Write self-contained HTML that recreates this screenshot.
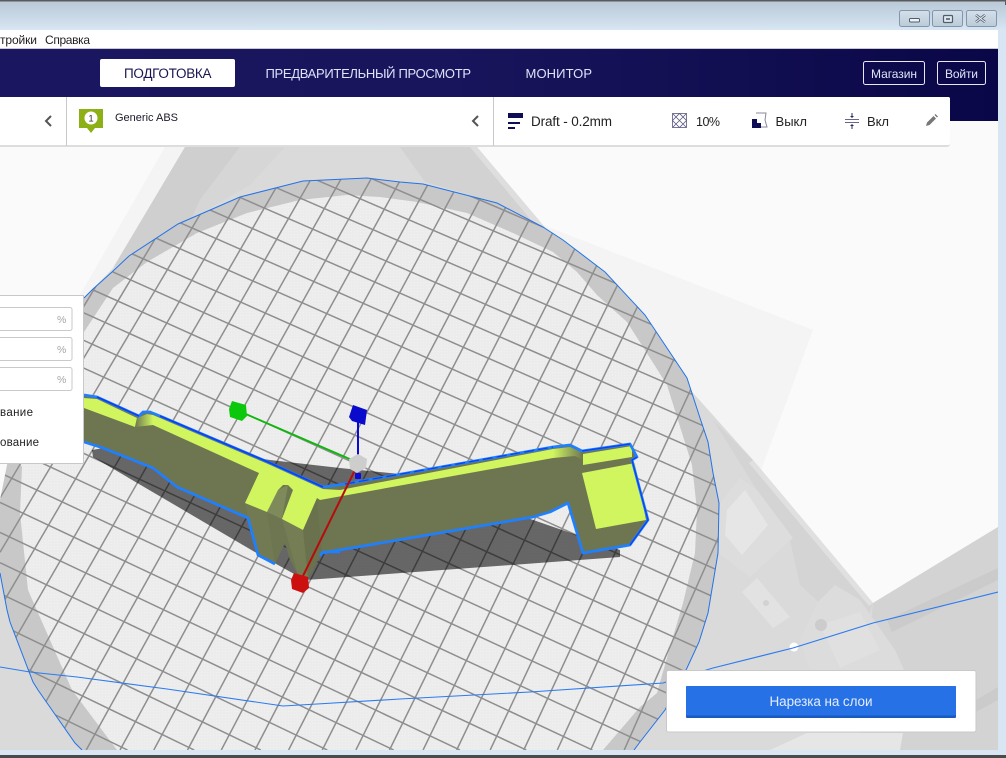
<!DOCTYPE html>
<html><head><meta charset="utf-8"><style>
html,body{margin:0;padding:0;width:1006px;height:758px;overflow:hidden;background:#d8e5f2}
svg{display:block;position:absolute;left:0;top:0}
text{font-family:"Liberation Sans","Noto Sans CJK SC",sans-serif}
</style></head><body>
<svg id="s" width="1006" height="758" viewBox="0 0 1006 758" xmlns="http://www.w3.org/2000/svg">
<defs>
<linearGradient id="tb" x1="0" y1="0" x2="0" y2="1"><stop offset="0" stop-color="#b8c8d8"/><stop offset="1" stop-color="#d8e6f3"/></linearGradient>
<linearGradient id="nav" x1="0" y1="0" x2="1" y2="0"><stop offset="0" stop-color="#1a1660"/><stop offset=".45" stop-color="#19155c"/><stop offset="1" stop-color="#0a0748"/></linearGradient>
<linearGradient id="wb" x1="0" y1="0" x2="0" y2="1"><stop offset="0" stop-color="#d4e0ea"/><stop offset="1" stop-color="#bccbd9"/></linearGradient>
<linearGradient id="fade" x1="0" y1="0" x2="1" y2="0"><stop offset="0" stop-color="#d0f55f"/><stop offset="1" stop-color="#6d7650"/></linearGradient>
<linearGradient id="fade2" x1="0" y1="0" x2="1" y2="0"><stop offset="0" stop-color="#6d7650"/><stop offset="1" stop-color="#d0f55f"/></linearGradient>
<pattern id="dots" width="3" height="3" patternUnits="userSpaceOnUse"><rect width="3" height="3" fill="#ececec"/><rect width="1" height="1" fill="#f1f1f1"/></pattern>
<clipPath id="vp"><rect x="0" y="49" width="998" height="701"/></clipPath>
<clipPath id="pl"><polygon points="0,500 20,400 84,298 93,289 112,272 129,256 178,224 240,197 303,181 367,178 400,182 423,184 497,203 543,227 563,240 605,272 645,315 663,342 687,378 700,418 708,442 713,473 719,503 718,553 708,613 699,642 687,668 665,710 640,742 634,750 82,750 75,743 38,690 33,682 10,622 7,610 0,573"/></clipPath>
</defs>

<!-- window chrome -->
<rect x="0" y="0" width="1006" height="758" fill="#d8e5f2"/>
<rect x="0" y="1" width="1006" height="29" fill="url(#tb)"/>
<rect x="0" y="0" width="1006" height="1.5" fill="#5a5a5a"/>
<rect x="0" y="755" width="1006" height="3" fill="#4a4a4a"/>
<rect x="1005" y="0" width="1" height="5" fill="#5a5a5a"/>

<rect x="899.5" y="10.5" width="30" height="16" rx="2" fill="url(#wb)" stroke="#8396a9"/>
<rect x="932.5" y="10.5" width="30" height="16" rx="2" fill="url(#wb)" stroke="#8396a9"/>
<rect x="966.5" y="10.5" width="30" height="16" rx="2" fill="url(#wb)" stroke="#8396a9"/>
<rect x="909.5" y="18.5" width="10" height="3.5" rx="1" fill="#eef3f7" stroke="#4e5e6e"/>
<rect x="943.5" y="15.5" width="9" height="7" rx="1" fill="#dfe7ee" stroke="#4e5e6e" stroke-width="1.2"/>
<rect x="946" y="18" width="4" height="2" fill="#6a7a8a"/>
<path d="M976 15l9 7M985 15l-9 7" stroke="#4e5e6e" stroke-width="2.6"/>
<path d="M976 15l9 7M985 15l-9 7" stroke="#eef3f7" stroke-width="1"/>

<!-- menu -->
<rect x="0" y="30" width="998" height="18" fill="#fff"/>
<rect x="0" y="48" width="998" height="1" fill="#c8c8d0"/>
<text x="0" y="44" font-size="12" fill="#222" textLength="37" lengthAdjust="spacing">тройки</text>
<text x="45" y="44" font-size="12" fill="#222" textLength="45" lengthAdjust="spacing">Справка</text>

<!-- 3D viewport -->
<g clip-path="url(#vp)">
<rect x="0" y="49" width="998" height="701" fill="#fafafa"/>
<polygon points="543,225 813,330 760,473 700,420" fill="#f4f4f4"/>
<polygon points="165,147 190,147 113,270 70,320 60,310 80,295" fill="#f4f4f4"/>
<polygon points="185,147 477,147 543,225 753,460 873,603 998,527 998,750 0,750 0,540 60,340 84,298 113,268" fill="#dadada"/>
<polygon points="185,147 240,147 200,200 190,222 129,258 113,268" fill="#cfcfcf"/>
<polygon points="240,147 285,147 250,185 215,205 190,222 200,200" fill="#d6d6d6"/>
<polygon points="477,147 400,147 425,182 497,203 543,227" fill="#d2d2d2"/>
<polygon points="470,147 477,147 543,225 536,226" fill="#dedede"/>
<polygon points="713,420 753,460 873,603 860,640 800,585 790,540 757,490" fill="#d4d4d4"/>
<polygon points="753,460 873,603 869,606 749,463" fill="#e0e0e0"/>
<polygon points="873,603 998,527 998,750 860,750" fill="#d3d3d3"/>
<polygon points="887,620 998,568 998,580 892,632" fill="#cbcbcb"/>
<polygon points="976,700 998,687 998,700 976,712" fill="#cbcbcb"/>
<!-- printer details -->
<polygon points="720,503 740,478 757,490 793,538 750,577 718,553" fill="#dddddd"/>
<polygon points="727,510 745,490 768,525 742,555 725,535" fill="#e6e6e6"/>
<polygon points="742,592 757,578 790,617 773,628" fill="#e2e2e2"/>
<circle cx="766" cy="603" r="3" fill="#d2d2d2"/>
<polygon points="817,603 835,585 860,600 895,650 905,672 810,672 800,640" fill="#dcdcdc"/>
<polygon points="820,625 860,612 880,650 840,668" fill="#e0e0e0"/>
<circle cx="821" cy="625" r="6" fill="#cccccc"/>
<polygon points="770,750 807,733 903,733 900,750" fill="#e6e6e6"/>
<circle cx="794" cy="647" r="4.5" fill="#fff"/>

<!-- build plate -->
<g clip-path="url(#pl)">
<rect x="0" y="150" width="998" height="600" fill="#c8c8c8"/>
<polygon points="0,430 40,380 84,332 113,288 147,262 197,233 247,213 300,200 347,195 380,197 417,202 467,213 513,233 553,252 577,272 597,295 627,322 650,358 667,385 692,465 697,510 695,553 683,603 670,647 657,693 640,707 603,750 117,750 72,690 28,590 20,513 22,467" fill="url(#dots)"/>
<g id="grid" stroke="#8e8e8e" stroke-width="1.5"></g>
</g>
<!-- blue outlines -->
<polyline points="0,573 7,610 10,622 33,682 38,690 75,743 82,750" fill="none" stroke="#2273e8" stroke-width="1"/>
<polyline points="84,298 93,289 112,272 129,256 178,224 240,197 303,181 367,178 400,182 423,184 497,203 543,227 563,240 605,272 645,315 663,342 687,378 700,418 708,442 713,473 719,503 718,553 708,613 699,642 687,668 665,710 640,742 634,750" fill="none" stroke="#2273e8" stroke-width="1"/>
<polyline points="0,667 30,672 77,677 167,689 283,706 317,704 400,699 530,692 663,683 713,668 793,648 873,623 998,592" fill="none" stroke="#2a7bf0" stroke-width="1.1"/>

<!-- shadow -->
<polygon points="92,450 93,457 260,555 305,580 320,579 620,557 620,550 400,474 340,468 270,460 150,440" fill="#000" fill-opacity=".57"/>

<!-- model body -->
<polygon points="84,395 97,397 139,416 143,412 150,412 160,416 268,462 323,487 345,484 553,447 570,445 582,451 630,444 637,457 632,460 648,520 630,545 583,553 568,503 550,512 533,517 322,553 308,578 298,575 290,560 285,543 275,564 258,555 248,518 177,487 153,468 103,448 84,442" fill="#6d7650"/>
<polygon points="245,503 267,512 275,564 258,555 248,518" fill="#717a52"/>
<polygon points="282,519 303,530 308,578 298,575" fill="#757d55"/>
<polygon points="303,530 317,498 322,553 308,578" fill="#6a724d"/>
<polygon points="278,490 288,485 282,519 267,512" fill="#7f8a5a"/>
<polygon points="583,465 632,457 632,463 582,473" fill="#6d7650"/>
<!-- yellow top -->
<polygon points="84,398 97,399 137,418 135,427 84,408" fill="#d0f55f"/>
<polygon points="137,418 147,414 153,415 153,425 135,427" fill="url(#fade2)"/>
<polygon points="153,415 268,464 323,489 340,490 553,449 553,458 320,500 317,498 303,530 282,519 293,490 288,485 283,485 278,490 267,512 245,503 259,473 153,425" fill="#d0f55f"/>
<polygon points="553,449 570,447 581,452 583,460 575,456 553,458" fill="url(#fade)"/>
<polygon points="583,454 632,446 632,457 583,465" fill="#d0f55f"/>
<polygon points="582,473 635,463 646,520 596,529" fill="#d0f55f"/>
<!-- model outline -->
<polyline points="84,395 97,397 139,416 143,412 150,412 160,416 268,462 323,487 345,484 553,447 570,445 582,451 630,444 637,457 632,460 648,520 630,545 583,553 568,503 550,512 533,517 322,553 320,556" fill="none" stroke="#1e80ff" stroke-width="2.7" stroke-linejoin="round"/>
<polyline points="97,397 139,416" fill="none" stroke="#0c3ff0" stroke-width="1.6"/>
<polyline points="160,416 268,462 323,487" fill="none" stroke="#0c3ff0" stroke-width="1.6"/>
<polyline points="345,484 553,447" fill="none" stroke="#0c3ff0" stroke-width="1.2" stroke-dasharray="10 4"/>
<polyline points="582,451 630,444" fill="none" stroke="#0c3ff0" stroke-width="1.2"/>
<polyline points="637,457 632,460 648,520 630,545" fill="none" stroke="#0c3ff0" stroke-width="1.2"/>
<polyline points="84,442 103,448 153,468 177,487 248,518 258,555 275,564" fill="none" stroke="#1e80ff" stroke-width="2.7" stroke-linejoin="round"/>
<polyline points="320,556 323,552 340,552" fill="none" stroke="#1e80ff" stroke-width="2.4"/>

<!-- gizmo -->
<line x1="241" y1="412" x2="352" y2="460" stroke="#0cb80c" stroke-width="1.8"/>
<line x1="358" y1="420" x2="358" y2="458" stroke="#0a0ad0" stroke-width="2"/>
<line x1="355" y1="470" x2="301" y2="580" stroke="#b80c0c" stroke-width="2"/>
<polygon points="232,401 246,405 247,416 242,421 230,417 229,409" fill="#0cc80c"/>
<polygon points="353,405 367,410 365,425 352,421 349,417" fill="#0a0acc"/>
<polygon points="349,459 358,454 367,459 366,468 357,473 350,469" fill="#cdcdcd"/>
<rect x="355" y="473" width="6" height="6" rx="1" fill="#0a0ae0"/>
<polygon points="294,573 308,577 309,588 303,593 292,589 291,580" fill="#cc1010"/>
</g>

<!-- header -->
<rect x="0" y="49" width="998" height="72" fill="url(#nav)"/>
<rect x="100" y="59" width="135" height="28" rx="2" fill="#fff"/>
<text x="124" y="78" font-size="13.5" fill="#19154f" textLength="87.5" lengthAdjust="spacing">ПОДГОТОВКА</text>
<text x="265.500" y="78" font-size="13" fill="#dfe2fb" textLength="205.500" lengthAdjust="spacing">ПРЕДВАРИТЕЛЬНЫЙ ПРОСМОТР</text>
<text x="525.500" y="78" font-size="13" fill="#dfe2fb" textLength="66.500" lengthAdjust="spacing">МОНИТОР</text>
<rect x="863.500" y="61.500" width="61" height="23" rx="2" fill="none" stroke="#e8e8f4"/>
<text x="871" y="78" font-size="12" fill="#e0e4f8" textLength="46" lengthAdjust="spacing">Магазин</text>
<rect x="937.500" y="61.500" width="48" height="23" rx="2" fill="none" stroke="#e8e8f4"/>
<text x="945" y="78" font-size="12" fill="#e0e4f8" textLength="33" lengthAdjust="spacing">Войти</text>

<!-- toolbar -->
<path d="M0 97H948a2 2 0 0 1 2 2V144a3 3 0 0 1-3 3H0Z" fill="#ddd"/>
<path d="M0 97H948a2 2 0 0 1 2 2V143a2 2 0 0 1-2 2H0Z" fill="#fff"/>
<rect x="66" y="97" width="1" height="49" fill="#c9c9c9"/>
<rect x="493" y="97" width="1" height="49" fill="#c9c9c9"/>
<path d="M51 116l-5 5 5 5" fill="none" stroke="#555" stroke-width="2"/>
<path d="M478 116l-5 5 5 5" fill="none" stroke="#555" stroke-width="2"/>
<path d="M79 109H103V128H95L91 133 87 128H79Z" fill="#8cb015"/>
<circle cx="91" cy="118" r="6.500" fill="#fff"/>
<text x="91" y="121.500" font-size="9.500" fill="#333" text-anchor="middle">1</text>
<text x="115" y="121" font-size="11" fill="#1a1a2a" textLength="63" lengthAdjust="spacing">Generic ABS</text>

<rect x="508" y="113" width="15" height="5" fill="#0f0d55"/>
<rect x="508" y="122" width="12" height="2" fill="#0f0d55"/>
<rect x="508" y="127" width="7" height="2" fill="#0f0d55"/>
<text x="531" y="126" font-size="13.500" fill="#222" textLength="81" lengthAdjust="spacing">Draft - 0.2mm</text>

<g fill="none" stroke="#5a5880" stroke-width=".8">
<rect x="672.500" y="113.500" width="14" height="14"/>
<path d="M672.500 120.500l7-7 7 7-7 7zM672.500 113.500l14 14M686.500 113.500l-14 14"/>
</g>
<text x="696" y="126" font-size="12.500" fill="#222" textLength="24" lengthAdjust="spacing">10%</text>

<path d="M756 113H766L765 120 767 127H758" fill="none" stroke="#8a8a9a" stroke-width="1"/>
<path d="M752 128V119H757V123H761V128Z" fill="#0f0d55"/>
<text x="775.500" y="126" font-size="13" fill="#222" textLength="31.500" lengthAdjust="spacing">Выкл</text>

<g stroke="#2a2860" fill="#2a2860">
<path d="M845 119.500H859M845 122.500H859" stroke-width="1" fill="none" stroke="#67658a"/>
<path d="M852 113V117M852 125V129" stroke-width="1"/>
<path d="M850 116h4l-2 2zM850 126h4l-2-2z" stroke="none"/>
</g>
<text x="867" y="126" font-size="13" fill="#222" textLength="22" lengthAdjust="spacing">Вкл</text>

<path d="M926 126l1-3.500 6.500-6.500 2.500 2.500-6.500 6.500ZM934.500 115l1-1 2.500 2.500-1 1Z" fill="#777"/>

<!-- left panel -->
<path d="M0 295.500H83.500V463.500H0" fill="#fff" stroke="#c8c8c8"/>
<path d="M0 307.500H70a2 2 0 0 1 2 2V328.500a2 2 0 0 1-2 2H0" fill="#fff" stroke="#c9c9c9"/>
<path d="M0 337.500H70a2 2 0 0 1 2 2V358.500a2 2 0 0 1-2 2H0" fill="#fff" stroke="#c9c9c9"/>
<path d="M0 367.500H70a2 2 0 0 1 2 2V388.500a2 2 0 0 1-2 2H0" fill="#fff" stroke="#c9c9c9"/>
<text x="57" y="323" font-size="10.500" fill="#a5a5a5">%</text>
<text x="57" y="353" font-size="10.500" fill="#a5a5a5">%</text>
<text x="57" y="383" font-size="10.500" fill="#a5a5a5">%</text>
<text x="0" y="416" font-size="11.500" fill="#222" textLength="33" lengthAdjust="spacing">вание</text>
<text x="0" y="446" font-size="11.500" fill="#222" textLength="39" lengthAdjust="spacing">ование</text>

<!-- slice panel -->
<rect x="666.500" y="670.500" width="309.500" height="61.500" rx="2" fill="#fff" stroke="#c9c9c9"/>
<rect x="686" y="686" width="270" height="32" rx="1" fill="#1b5bc0"/>
<rect x="686" y="686" width="270" height="29.500" rx="1" fill="#2671e6"/>
<text x="769.500" y="706" font-size="13.500" fill="#e4edfc" textLength="103" lengthAdjust="spacing">Нарезка на слои</text>
</svg>
<script>
(function(){
var g=-.0022,h=-.005,a=25.62,b=-14.15,d=10.95,e=21.14,cx=490,cy=611.7;
function P(u,v){var w=1+g*u+h*v;return [(cx+a*u+b*v)/w,(cy+d*u+e*v)/w];}
var G=document.getElementById('grid'),NS='http://www.w3.org/2000/svg';
function L(p,q){
 var x0=0,x1=998,y0=147,y1=750,dx=q[0]-p[0],dy=q[1]-p[1],t0=0,t1=1;
 var cs=[[-dx,p[0]-x0],[dx,x1-p[0]],[-dy,p[1]-y0],[dy,y1-p[1]]];
 for(var i=0;i<4;i++){var A=cs[i][0],B=cs[i][1];
  if(A===0){if(B<0)return;continue;}
  var r=B/A; if(A<0){if(r>t1)return;if(r>t0)t0=r;}else{if(r<t0)return;if(r<t1)t1=r;}}
 var l=document.createElementNS(NS,'line');
 l.setAttribute('x1',(p[0]+t0*dx).toFixed(1));l.setAttribute('y1',(p[1]+t0*dy).toFixed(1));
 l.setAttribute('x2',(p[0]+t1*dx).toFixed(1));l.setAttribute('y2',(p[1]+t1*dy).toFixed(1));
 G.appendChild(l);
}
for(var i=-32;i<=32;i++){L(P(i,-32),P(i,32));L(P(-32,i),P(32,i));}
})();
</script>
</body></html>
